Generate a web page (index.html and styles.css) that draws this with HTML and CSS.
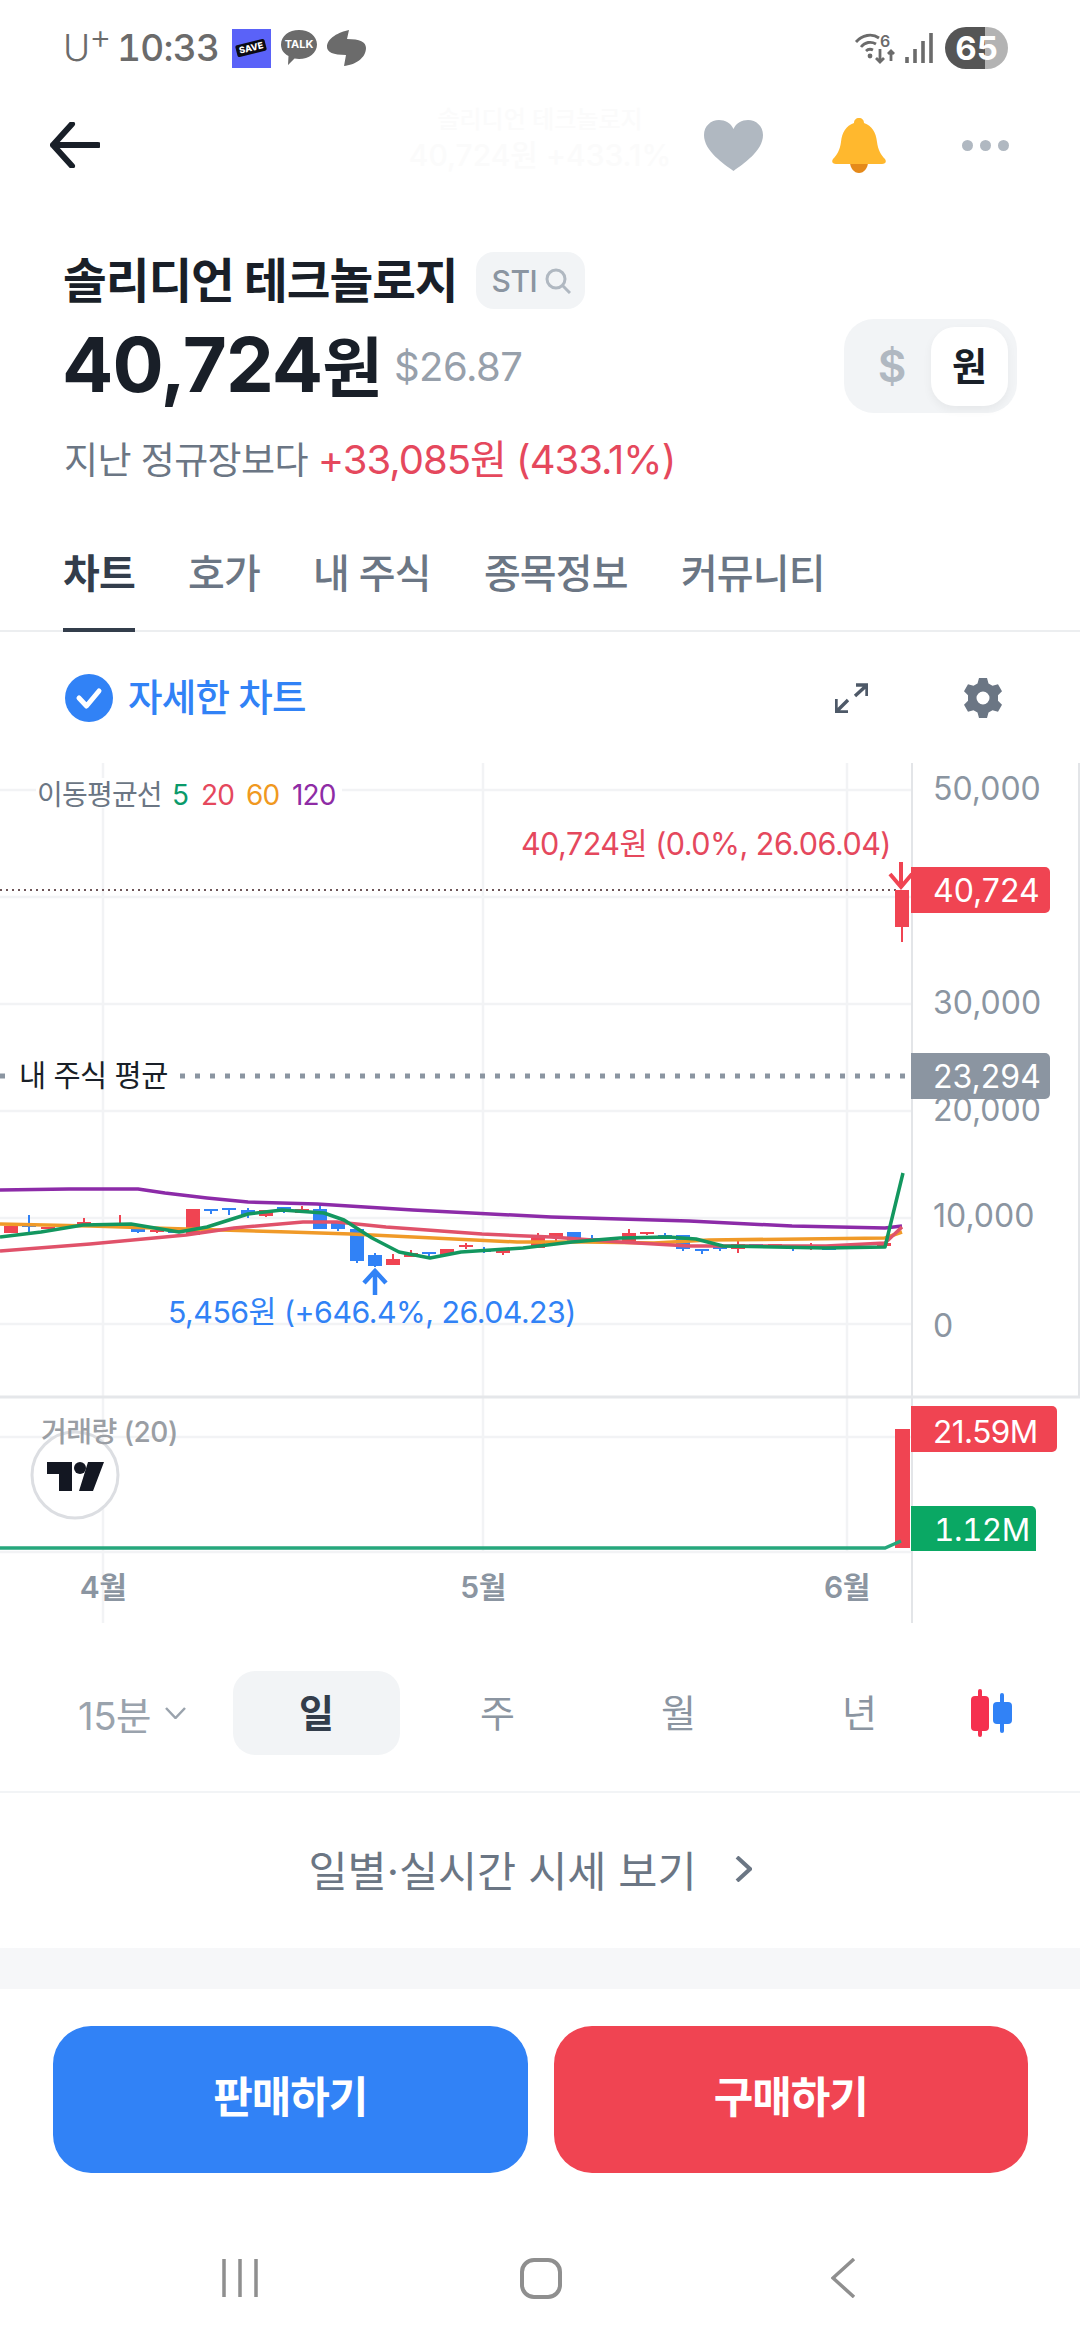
FILE: index.html
```html
<!DOCTYPE html>
<html lang="ko">
<head>
<meta charset="utf-8">
<title>솔리디언 테크놀로지</title>
<link rel="stylesheet" href="styles.css">
</head>
<body>
<div class="screen">
  <div class="status">
    <div class="status-left">
      <span class="carrier">U<sup>+</sup></span>
      <span class="clock">10:33</span>
      <span class="save"><span class="save-tag">SAVE</span></span>
      <span class="talk">
        <svg class="talk-bubble" viewBox="0 0 38 36"><path d="M19 0C29 0 37 6 37 14.500S29 29 19 29C17.500 29 16 28.800 14.500 28.500L8 35 8.500 26C3.500 23.500 1 19.500 1 14.500 1 6 9 0 19 0Z"/></svg>
        <span class="talk-text">TALK</span>
      </span>
      <svg class="swirl" viewBox="0 0 39 36"><path d="M22 0C12 2 0 8 0 17 0 22 6 25 19 25L17 36C28 35 39 28 39 18 39 12 33 9 20 9Z"/></svg>
    </div>
    <div class="status-right">
      <svg class="wifi" viewBox="0 0 40 30">
        <path class="ico-stroke" d="M1 9C7 2 17 0 24 5M6 14C10 9 16 8 21 11M11 18C13 16 16 16 18 17"/>
        <circle class="ico-fill" cx="15" cy="23" r="2.400"/>
        <path class="ico-stroke" d="M25 16V29M21 25L25 29 29 25M36 28V18M33 21L36 18 39 21"/>
        <text class="wifi-six" x="25" y="14">6</text>
      </svg>
      <svg class="signal" viewBox="0 0 28 30">
        <path class="bars" d="M2 30V24M10 30V16M18 30V8M26 30V0"/>
      </svg>
      <span class="battery">65</span>
    </div>
  </div>

  <div class="topbar">
    <div class="ghost"><div class="ghost-name">솔리디언 테크놀로지</div><div class="ghost-price">40,724원 +433.1%</div></div>
    <svg class="back" viewBox="0 0 50 46"><path d="M48 23H3M22 2 3 23 22 44"/></svg>
    <svg class="heart" viewBox="0 0 59 51"><path d="M29.500 51C20 44 0 31 0 15 0 6 7 0 15 0 21 0 27 3 29.500 9 32 3 38 0 44 0 52 0 59 6 59 15 59 31 39 44 29.500 51Z"/></svg>
    <svg class="bell" viewBox="0 0 54 55"><path class="bell-clap" d="M18 44H36C36 50 32 55 27 55 22 55 18 50 18 44Z"/><path class="bell-body" d="M27 0C30 0 32 2 32 5 40 8 44 14 45 24 46 32 49 37 53 41 55 44 53 46 50 46H4C1 46-1 44 1 41 5 37 8 32 9 24 10 14 14 8 22 5 22 2 24 0 27 0Z"/></svg>
    <div class="dots"><i></i><i></i><i></i></div>
  </div>

  <div class="head">
    <div class="name-row">
      <h1 class="name">솔리디언 테크놀로지</h1>
      <div class="ticker"><span>STI</span>
        <svg class="ticker-search" viewBox="0 0 26 26"><circle cx="11" cy="11" r="9"/><path d="M17.500 17.500 25 25"/></svg>
      </div>
    </div>
    <div class="price-row">
      <div class="price">40,724<span class="price-won">원</span></div>
      <div class="usd">$26.87</div>
      <div class="toggle"><span class="toggle-usd">$</span><span class="toggle-krw">원</span></div>
    </div>
    <div class="change">지난 정규장보다 <span class="change-up">+33,085원 (433.1%)</span></div>
  </div>

  <div class="tabs">
    <div class="tab tab-on">차트</div>
    <div class="tab">호가</div>
    <div class="tab">내 주식</div>
    <div class="tab">종목정보</div>
    <div class="tab">커뮤니티</div>
  </div>

  <div class="options">
    <svg class="check" viewBox="0 0 48 48"><circle cx="24" cy="24" r="24"/><path d="M14 24 21.500 32 34 17"/></svg>
    <span class="options-label">자세한 차트</span>
    <svg class="expand" viewBox="0 0 33 31"><path d="M21 3H32V14M32 3 20 14M1 17V30H13M1 30 13 18"/></svg>
    <svg class="gear" viewBox="0 0 38 40"><path fill-rule="evenodd" d="M15 0H23L24.500 5.500 28.500 7.800 34 6.300 38 13.300 34 17.300V22.700L38 26.700 34 33.700 28.500 32.200 24.500 34.500 23 40H15L13.500 34.500 9.500 32.200 4 33.700 0 26.700 4 22.700V17.300L0 13.300 4 6.300 9.500 7.800 13.500 5.500ZM19 13.500A6.500 6.500 0 1 0 19 26.500 6.500 6.500 0 1 0 19 13.500Z"/></svg>
  </div>

  <svg class="chart" viewBox="0 763 1080 860">
    <g class="grid">
      <path d="M103 763V1623M483 763V1552M847 763V1552M0 790H912M0 897H912M0 1004H912M0 1111H912M0 1218H912M0 1324H912M0 1437H912M0 1552H912"/>
    </g>
    <path class="axis" d="M912 763V1623M1079 763V1397"/>
    <path class="pane" d="M0 1397H1080"/>

    <rect class="legend-bg" x="36" y="778" width="306" height="30"/>
    <text class="legend legend-name" x="37" y="805">이동평균선</text>
    <text class="legend ma5" x="172" y="805">5</text>
    <text class="legend ma20" x="201" y="805">20</text>
    <text class="legend ma60" x="246" y="805">60</text>
    <text class="legend ma120" x="292" y="805">120</text>

    <text class="axis-num" x="933" y="800">50,000</text>
    <text class="axis-num" x="933" y="1014">30,000</text>
    <text class="axis-num" x="933" y="1121">20,000</text>
    <text class="axis-num" x="933" y="1227">10,000</text>
    <text class="axis-num" x="933" y="1337">0</text>

    <path class="last-line" d="M0 890H898"/>
    <text class="note note-high" x="891" y="855">40,724원 (0.0%, 26.06.04)</text>
    <path class="arrow-high" d="M901 862V886M890 874 901 887 912 874"/>

    <text class="avg-label" x="19" y="1086">내 주식 평균</text>
    <path class="avg-line" d="M0 1076H5M180 1076H906"/>

    <path class="wick-red" d="M84 1218V1225M120 1215V1228M157 1230V1233M266 1210V1217M302 1206V1213M393 1254V1265M411 1250V1257M466 1243V1249M503 1248V1255M538 1233V1248M556 1233V1241M629 1229V1242M647 1232V1235M738 1241V1253M811 1243V1250M884 1243V1248M902 890V942"/>
    <path class="wick-blue" d="M29 1215V1232M138 1227V1233M211 1209V1214M229 1208V1215M248 1208V1218M284 1207V1213M320 1205V1229M338 1222V1231M357 1229V1263M375 1253V1267M429 1252V1257M484 1247V1253M592 1235V1243M665 1233V1237M683 1235V1251M702 1249V1254M720 1247V1251M793 1247V1251"/>
    <path class="body-red" d="M4 1226h14v7h-14zM41 1227h14v2h-14zM60 1224h14v3h-14zM77 1222h14v2h-14zM113 1224h14v4h-14zM150 1230h14v2h-14zM186 1209h14v26h-14zM259 1210h14v6h-14zM295 1209h14v4h-14zM386 1259h14v6h-14zM404 1253h14v4h-14zM440 1249h14v6h-14zM459 1245h14v2h-14zM496 1250h14v3h-14zM513 1247h14v2h-14zM531 1238h14v10h-14zM549 1233h14v4h-14zM604 1241h14v2h-14zM622 1233h14v9h-14zM640 1232h14v2h-14zM731 1244h14v5h-14zM768 1244h14v3h-14zM804 1246h14v2h-14zM858 1243h14v2h-14zM877 1243h14v3h-14zM895 890h14v37h-14z"/>
    <path class="body-blue" d="M22 1225h14v2h-14zM95 1224h14v2h-14zM131 1227h14v5h-14zM168 1228h14v5h-14zM204 1209h14v2h-14zM222 1208h14v2h-14zM241 1210h14v5h-14zM277 1207h14v5h-14zM313 1209h14v20h-14zM331 1222h14v7h-14zM350 1229h14v32h-14zM368 1255h14v11h-14zM422 1252h14v2h-14zM477 1250h14v2h-14zM567 1232h14v10h-14zM585 1238h14v2h-14zM658 1235h14v2h-14zM676 1235h14v14h-14zM695 1249h14v2h-14zM713 1247h14v2h-14zM749 1244h14v4h-14zM786 1247h14v2h-14zM822 1248h14v2h-14zM840 1244h14v3h-14z"/>

    <polyline class="line line-purple" points="0,1190 69,1189 138,1189 165,1193 207,1198 248,1202 317,1204 413,1210 551,1217 689,1221 792,1226 885,1228 902,1226"/>
    <polyline class="line line-orange" points="0,1224 90,1226 186,1229 289,1232 351,1234 413,1237 517,1242 585,1242 654,1243 709,1240 885,1238 902,1232"/>
    <polyline class="line line-red" points="0,1251 90,1244 186,1235 234,1228 303,1222 337,1222 386,1227 482,1234 551,1237 620,1242 689,1246 826,1246 885,1243 902,1227"/>
    <polyline class="line line-green" points="0,1237 41,1232 83,1225 131,1224 179,1232 207,1227 248,1214 282,1210 324,1213 344,1220 372,1238 399,1252 430,1258 461,1252 523,1248 572,1242 620,1238 668,1237 696,1239 723,1246 826,1248 885,1247 903,1173"/>

    <path class="arrow-low" d="M375 1295V1272M364 1283 375 1271 386 1283"/>
    <text class="note note-low" x="168" y="1323">5,456원 (+646.4%, 26.04.23)</text>

    <path class="tag-red" d="M911 867H1045a5 5 0 0 1 5 5V908a5 5 0 0 1-5 5H911Z"/>
    <text class="tag-num" x="933" y="902">40,724</text>
    <path class="tag-gray" d="M911 1053H1045a5 5 0 0 1 5 5V1094a5 5 0 0 1-5 5H911Z"/>
    <text class="tag-num" x="933" y="1088">23,294</text>

    <circle class="tv-ring" cx="75" cy="1475" r="43"/>
    <path class="tv-logo" d="M47 1462H72V1491H59V1474H47ZM88 1462H104L93 1491H79Z"/>
    <circle class="tv-logo" cx="80" cy="1468" r="6"/>
    <text class="vol-label" x="41" y="1442">거래량 (20)</text>

    <rect class="vol-bar" x="895" y="1429" width="15" height="119"/>
    <path class="vol-line" d="M0 1548H885L901 1541"/>
    <path class="tag-red" d="M911 1406H1052a5 5 0 0 1 5 5V1447a5 5 0 0 1-5 5H911Z"/>
    <text class="tag-num tag-vol" x="933" y="1443">21.59M</text>
    <path class="tag-green" d="M911 1506H1031a5 5 0 0 1 5 5V1551H911Z"/>
    <text class="tag-num tag-vol tag-wide" x="934" y="1541">1.12M</text>

    <text class="month" x="103" y="1598">4월</text>
    <text class="month" x="483" y="1598">5월</text>
    <text class="month" x="847" y="1598">6월</text>
  </svg>

  <div class="periods">
    <div class="period-min">15분<svg class="min-chev" viewBox="0 0 21 12"><path d="M1 1 10.500 11 20 1"/></svg></div>
    <div class="period period-on">일</div>
    <div class="period">주</div>
    <div class="period">월</div>
    <div class="period">년</div>
    <svg class="candle-ico" viewBox="0 0 41 48">
      <path class="ci-red" d="M9 2V46"/><rect class="ci-red-b" x="0" y="7" width="18" height="35" rx="4"/>
      <path class="ci-blue" d="M31 6V42"/><rect class="ci-blue-b" x="22" y="13" width="19" height="22" rx="4"/>
    </svg>
  </div>

  <div class="daily">
    <span>일별·실시간 시세 보기</span>
    <svg class="daily-chev" viewBox="0 0 17 26"><path d="M2 1 15 13 2 25"/></svg>
  </div>

  <div class="band"></div>

  <div class="actions">
    <div class="btn btn-sell">판매하기</div>
    <div class="btn btn-buy">구매하기</div>
  </div>

  <div class="nav">
    <svg class="nav-recent" viewBox="0 0 36 40"><path d="M2 1V39M18 1V39M34 1V39"/></svg>
    <div class="nav-home"></div>
    <svg class="nav-back" viewBox="0 0 25 40"><path d="M23 1 2 20 23 39"/></svg>
  </div>
</div>
</body>
</html>
```

FILE: styles.css
```css
* { box-sizing: border-box; }
html, body { margin: 0; padding: 0; background: #fff; }
body { font-family: Inter, "Noto Sans CJK KR", sans-serif; color: #191f28; }
.screen { width: 1080px; height: 2340px; overflow: hidden; display: flex; flex-direction: column; }

/* status bar */
.status { height: 90px; padding: 27px 72px 0 63px; display: flex; justify-content: space-between; align-items: flex-start; flex: none; color: #6b6b6b; }
.status-left { display: flex; align-items: center; height: 42px; }
.carrier { font-size: 37px; font-weight: 300; width: 54px; line-height: 42px; white-space: nowrap; }
.carrier sup { font-size: 34px; line-height: 0; vertical-align: 12px; margin-left: -1px; }
.clock { font-size: 37px; font-weight: 500; line-height: 42px; width: 115px; letter-spacing: -.7px; font-feature-settings: "tnum"; }
.save { width: 39px; height: 39px; background: #5a62f8; display: flex; align-items: center; justify-content: center; }
.save-tag { background: #0a0a12; color: #fff; font-size: 9px; font-weight: 800; line-height: 12px; padding: 0 3px; border-radius: 2px; transform: rotate(-14deg); }
.talk { position: relative; width: 38px; height: 36px; margin-left: 9px; }
.talk-bubble { width: 38px; height: 36px; display: block; fill: #6b6b6b; }
.talk-text { position: absolute; left: 0; right: 0; top: 6px; text-align: center; color: #fff; font-size: 11px; font-weight: 700; line-height: 16px; }
.swirl { width: 39px; height: 36px; margin-left: 9px; fill: #6b6b6b; }
.status-right { display: flex; align-items: center; height: 42px; }
.wifi { width: 40px; height: 30px; overflow: visible; }
.ico-stroke { fill: none; stroke: #6b6b6b; stroke-width: 2.800; }
.ico-fill { fill: #6b6b6b; }
.wifi-six { font-size: 16px; font-weight: 600; fill: #6b6b6b; }
.signal { width: 28px; height: 30px; margin-left: 10px; }
.bars { fill: none; stroke: #6b6b6b; stroke-width: 3.600; }
.battery { width: 63px; height: 42px; margin-left: 12px; border-radius: 21px; background: linear-gradient(90deg, #555 63.500%, #b3b3b3 63.500%); color: #fff; font-size: 33px; font-weight: 700; line-height: 42px; text-align: center; }

/* top bar */
.topbar { position: relative; height: 110px; padding: 0 71px 0 50px; display: flex; align-items: center; flex: none; }
.ghost { position: absolute; left: 0; right: 0; top: 14px; text-align: center; color: #fbfbfb; font-weight: 500; }
.ghost-name { font-size: 24px; line-height: 32px; }
.ghost-price { font-size: 30px; line-height: 38px; }
.back { width: 50px; height: 46px; fill: none; stroke: #191f28; stroke-width: 6; stroke-linecap: round; stroke-linejoin: round; }
.heart { width: 59px; height: 51px; margin-left: auto; fill: #b0b8c1; }
.bell { width: 54px; height: 55px; margin-left: 69px; }
.bell-body { fill: #ffb82e; }
.bell-clap { fill: #e58a1a; }
.dots { display: flex; gap: 7px; margin-left: 76px; }
.dots i { width: 11px; height: 11px; border-radius: 50%; background: #b0b8c1; display: block; }

/* stock head */
.head { height: 320px; padding: 52px 63px 0 64px; flex: none; }
.name-row { display: flex; align-items: center; height: 57px; }
.name { margin: 0 0 0 -1px; font-size: 47.500px; font-weight: 700; letter-spacing: -1px; line-height: 57px; color: #191f28; white-space: nowrap; }
.ticker { margin-left: 18px; width: 109px; height: 57px; background: #f2f4f6; border-radius: 18px; display: flex; align-items: center; padding-left: 16px; color: #8b95a1; font-size: 30px; font-weight: 500; letter-spacing: -.5px; }
.ticker-search { width: 26px; height: 26px; margin-left: 8px; fill: none; stroke: #b0b8c1; stroke-width: 3; }
.price-row { display: flex; align-items: center; height: 94px; margin-top: 10px; }
.price { font-size: 76px; font-weight: 700; letter-spacing: -1px; line-height: 94px; white-space: nowrap; margin-left: -2px; }
.price-won { font-size: 66px; letter-spacing: 0; }
.usd { margin-left: 11px; font-size: 40px; color: #97a0ab; letter-spacing: -.5px; }
.toggle { margin-left: auto; width: 173px; height: 94px; border-radius: 30px; background: #f2f4f6; display: flex; align-items: center; position: relative; }
.toggle-usd { width: 87px; padding-left: 9px; text-align: center; color: #b0b8c1; font-size: 44px; font-weight: 600; }
.toggle-krw { width: 77px; height: 79px; border-radius: 24px; background: #fff; box-shadow: 0 4px 10px rgba(0,0,0,.05); text-align: center; font-size: 38px; font-weight: 700; line-height: 79px; color: #191f28; }
.change { margin-top: 24px; font-size: 37px; line-height: 46px; color: #6b7684; letter-spacing: -.6px; white-space: nowrap; }
.change-up { color: #e5485d; font-size: 40px; letter-spacing: -1px; }

/* tabs */
.tabs { height: 112px; padding-left: 63px; display: flex; gap: 53px; border-bottom: 2px solid #eceef0; flex: none; }
.tab { height: 112px; padding-top: 26px; font-size: 40px; font-weight: 500; line-height: 56px; letter-spacing: -.8px; color: #6b7684; white-space: nowrap; }
.tab-on { font-weight: 700; color: #333d4b; border-bottom: 4px solid #333d4b; }

/* chart options */
.options { height: 131px; padding: 0 78px 0 65px; display: flex; align-items: center; flex: none; }
.check { width: 48px; height: 48px; }
.check circle { fill: #3182f6; }
.check path { fill: none; stroke: #fff; stroke-width: 5; stroke-linecap: round; stroke-linejoin: round; }
.options-label { margin-left: 15px; font-size: 37.500px; font-weight: 500; color: #3182f6; letter-spacing: -.8px; line-height: 50px; }
.expand { width: 33px; height: 31px; margin-left: auto; fill: none; stroke: #4e5968; stroke-width: 3.400; }
.gear { width: 38px; height: 40px; margin-left: 96px; fill: #6b7684; }

/* chart */
.chart { display: block; width: 1080px; height: 860px; flex: none; }
.chart text { font-family: Inter, "Noto Sans CJK KR", sans-serif; }
.grid path { fill: none; stroke: #f2f3f5; stroke-width: 2.500; }
.axis { fill: none; stroke: #e3e5e8; stroke-width: 2; }
.pane { fill: none; stroke: #e5e7ea; stroke-width: 3; }
.legend-bg { fill: #fff; }
.legend { font-size: 28px; letter-spacing: -.8px; }
.legend-name { fill: #6b7684; }
.ma5 { fill: #0a9a6a; }
.ma20 { fill: #e5485d; }
.ma60 { fill: #f0991f; }
.ma120 { fill: #8e2ca5; }
.axis-num { font-size: 32px; fill: #8b95a1; }
.last-line { fill: none; stroke: #6e5558; stroke-width: 2; stroke-dasharray: 2 4; }
.note { font-size: 30.500px; letter-spacing: -.5px; }
.note-high { fill: #e5485d; text-anchor: end; }
.note-low { fill: #3182f6; font-size: 30.300px; }
.arrow-high { fill: none; stroke: #f04452; stroke-width: 4; }
.avg-label { font-size: 29.500px; fill: #191f28; letter-spacing: -.5px; }
.avg-line { fill: none; stroke: #8b95a1; stroke-width: 5; stroke-dasharray: 5 10; }
.wick-red { fill: none; stroke: #f04452; stroke-width: 2; }
.wick-blue { fill: none; stroke: #3182f6; stroke-width: 2; }
.body-red { fill: #f04452; }
.body-blue { fill: #3182f6; }
.line { fill: none; stroke-width: 3.500; stroke-linejoin: round; }
.line-purple { stroke: #8c2ba8; }
.line-orange { stroke: #f09a28; }
.line-red { stroke: #e0526a; }
.line-green { stroke: #13975f; }
.arrow-low { fill: none; stroke: #3182f6; stroke-width: 4.500; }
.tag-red { fill: #f04452; }
.tag-gray { fill: #8b95a1; }
.tag-green { fill: #0aa864; }
.tag-num { font-size: 32px; fill: #fff; }
.tag-vol { font-size: 31.500px; letter-spacing: -.5px; }
.tag-wide { font-feature-settings: "tnum"; }
.vol-label { font-size: 28px; font-weight: 500; fill: #9a9ea4; letter-spacing: -.5px; }
.tv-ring { fill: #fff; stroke: #dcdee2; stroke-width: 3; }
.tv-logo { fill: #131722; }
.vol-bar { fill: #f04452; }
.vol-line { fill: none; stroke: #26a77c; stroke-width: 3.500; }
.month { font-size: 30px; font-weight: 600; fill: #8b95a1; text-anchor: middle; letter-spacing: -.5px; }

/* periods */
.periods { height: 170px; padding: 48px 0 0 78px; display: flex; align-items: flex-start; border-bottom: 2px solid #f2f4f6; flex: none; position: relative; }
.period-min { width: 155px; height: 84px; display: flex; align-items: center; font-size: 38.500px; color: #9aa3ad; letter-spacing: -.5px; white-space: nowrap; }
.min-chev { width: 21px; height: 12px; margin-left: 14px; fill: none; stroke: #9aa3ad; stroke-width: 2.500; }
.period { width: 167px; height: 84px; margin-right: 14px; border-radius: 22px; text-align: center; font-size: 38px; line-height: 84px; color: #8b95a1; }
.period-on { background: #f2f4f6; color: #333d4b; font-weight: 700; }
.candle-ico { width: 41px; height: 48px; margin: 18px 0 0 14px; }
.ci-red { stroke: #f5304f; stroke-width: 4; stroke-linecap: round; }
.ci-red-b { fill: #f5304f; }
.ci-blue { stroke: #3182f6; stroke-width: 4; stroke-linecap: round; }
.ci-blue-b { fill: #3182f6; }

/* daily link */
.daily { height: 155px; display: flex; align-items: center; justify-content: center; gap: 38px; padding: 0 20px 4px 0; font-size: 42.500px; font-weight: 400; color: #6b7684; white-space: nowrap; flex: none; }
.daily-chev { width: 17px; height: 26px; fill: none; stroke: #6b7684; stroke-width: 4; }
.band { height: 41px; background: #f6f7f9; flex: none; }

/* actions */
.actions { height: 184px; padding: 37px 52px 0 53px; display: flex; gap: 26px; flex: none; }
.btn { flex: 1; height: 147px; border-radius: 38px; color: #fff; font-size: 43px; font-weight: 600; line-height: 143px; text-align: center; letter-spacing: -1px; }
.btn-sell { background: #3182f6; }
.btn-buy { background: #f04452; }

/* nav */
.nav { flex: 1; padding: 85px 0 0 222px; display: flex; align-items: flex-start; }
.nav-recent { width: 36px; height: 40px; fill: none; stroke: #8f8f8f; stroke-width: 3.500; }
.nav-home { width: 42px; height: 41px; margin-left: 262px; border: 4.500px solid #8f8f8f; border-radius: 14px; }
.nav-back { width: 25px; height: 40px; margin-left: 269px; fill: none; stroke: #8f8f8f; stroke-width: 3.500; }
```
